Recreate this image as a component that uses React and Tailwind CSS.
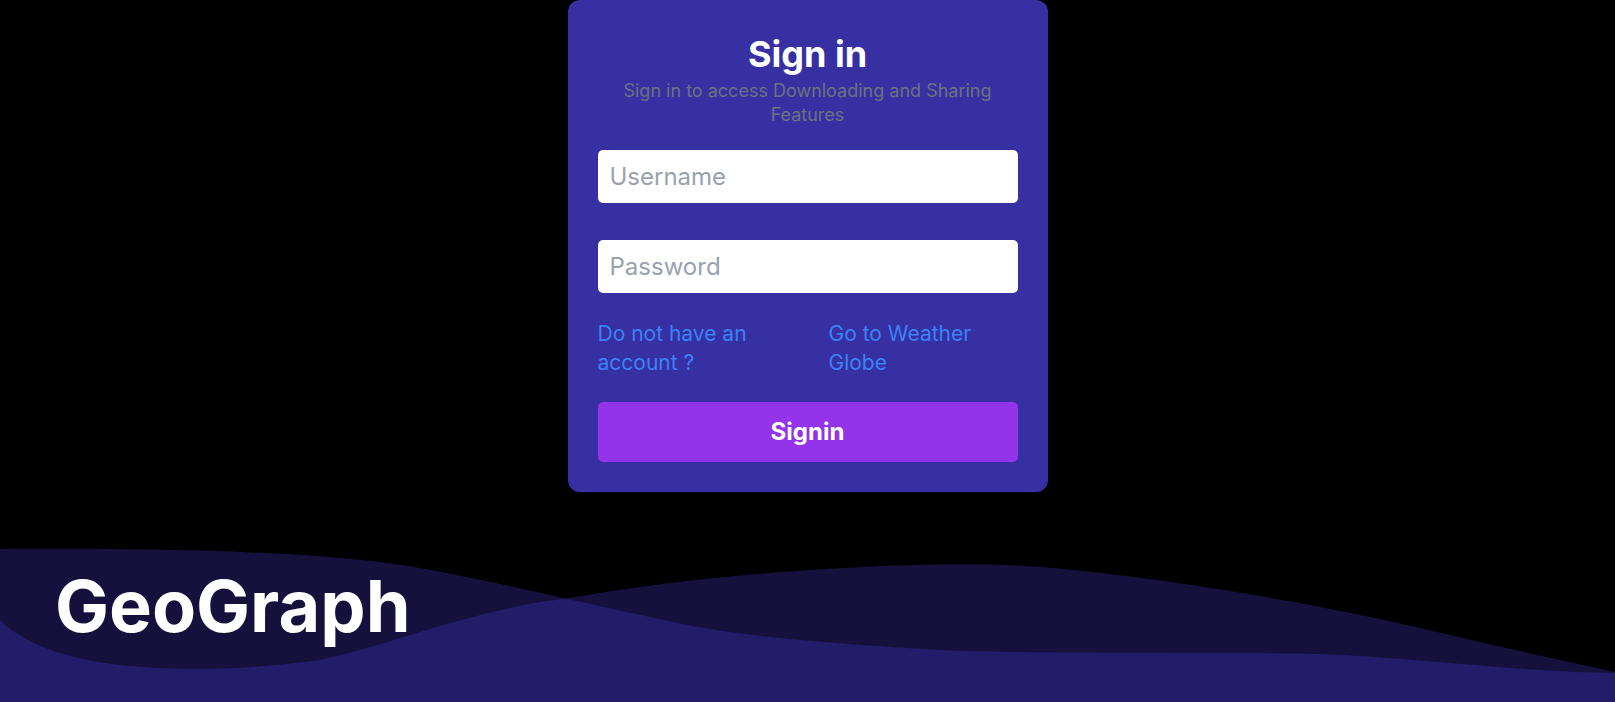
import React from "react";

const WAVE_A =
  "M0 19 C180 18 330 22 420 38 C500 52 620 82 704 98 C760 108 860 116 960 121 C1080 124 1250 122 1320 124 C1420 128 1520 142 1615 143 L1615 172 L0 172 Z";
const WAVE_B =
  "M0 90 C20 110 60 130 130 136 C200 142 260 138 320 130 C400 112 470 80 569 68 C640 56 700 48 808 40 C900 34 980 32 1040 37 C1150 46 1300 70 1420 98 C1500 117 1570 132 1615 142 L1615 172 L0 172 Z";

const Waves = () => (
  <svg
    className="absolute inset-0 w-full h-full"
    viewBox="0 0 1615 172"
    preserveAspectRatio="none"
  >
    <defs>
      <clipPath id="waveA">
        <path d={WAVE_A} />
      </clipPath>
    </defs>
    <path d={WAVE_A} fill="#15113c" />
    <path d={WAVE_B} fill="#15113c" />
    <path d={WAVE_B} fill="#221c69" clipPath="url(#waveA)" />
  </svg>
);

export default function App() {
  return (
    <div className="h-[702px] bg-black flex flex-col font-['Inter',sans-serif] overflow-hidden">
      {/* ── Sign in card ── */}
      <div className="w-[480px] mx-auto bg-[#3730a3] rounded-xl px-[30px] pt-[34px] pb-[30px] flex flex-col">
        <h1 className="text-center text-white text-[36px] leading-[40px] font-bold">Sign in</h1>
        <p className="mt-[5px] text-center text-[#6b7280] text-[18px] leading-[24px]">
          Sign in to access Downloading and Sharing Features
        </p>

        <input
          type="text"
          placeholder="Username"
          className="mt-[23px] h-[53px] rounded-[5px] bg-white px-3 text-2xl text-gray-800 placeholder:text-gray-400 outline-none"
        />
        <input
          type="password"
          placeholder="Password"
          className="mt-[37px] h-[53px] rounded-[5px] bg-white px-3 text-2xl text-gray-800 placeholder:text-gray-400 outline-none"
        />

        <div className="mt-[26px] grid grid-cols-[231px_1fr] text-[21px] leading-[29px] text-[#3b82f6]">
          <a href="#" className="pr-[60px]">Do not have an account ?</a>
          <a href="#">Go to Weather Globe</a>
        </div>

        <button className="mt-[25px] h-[60px] rounded-[5px] bg-[#9333ea] text-white font-bold text-2xl">
          Signin
        </button>
      </div>

      {/* ── Footer waves ── */}
      <div className="relative mt-auto h-[172px]">
        <Waves />
        <h2 className="relative pl-[55px] pt-[40px] text-white text-[72px] leading-none font-bold">
          GeoGraph
        </h2>
      </div>
    </div>
  );
}
